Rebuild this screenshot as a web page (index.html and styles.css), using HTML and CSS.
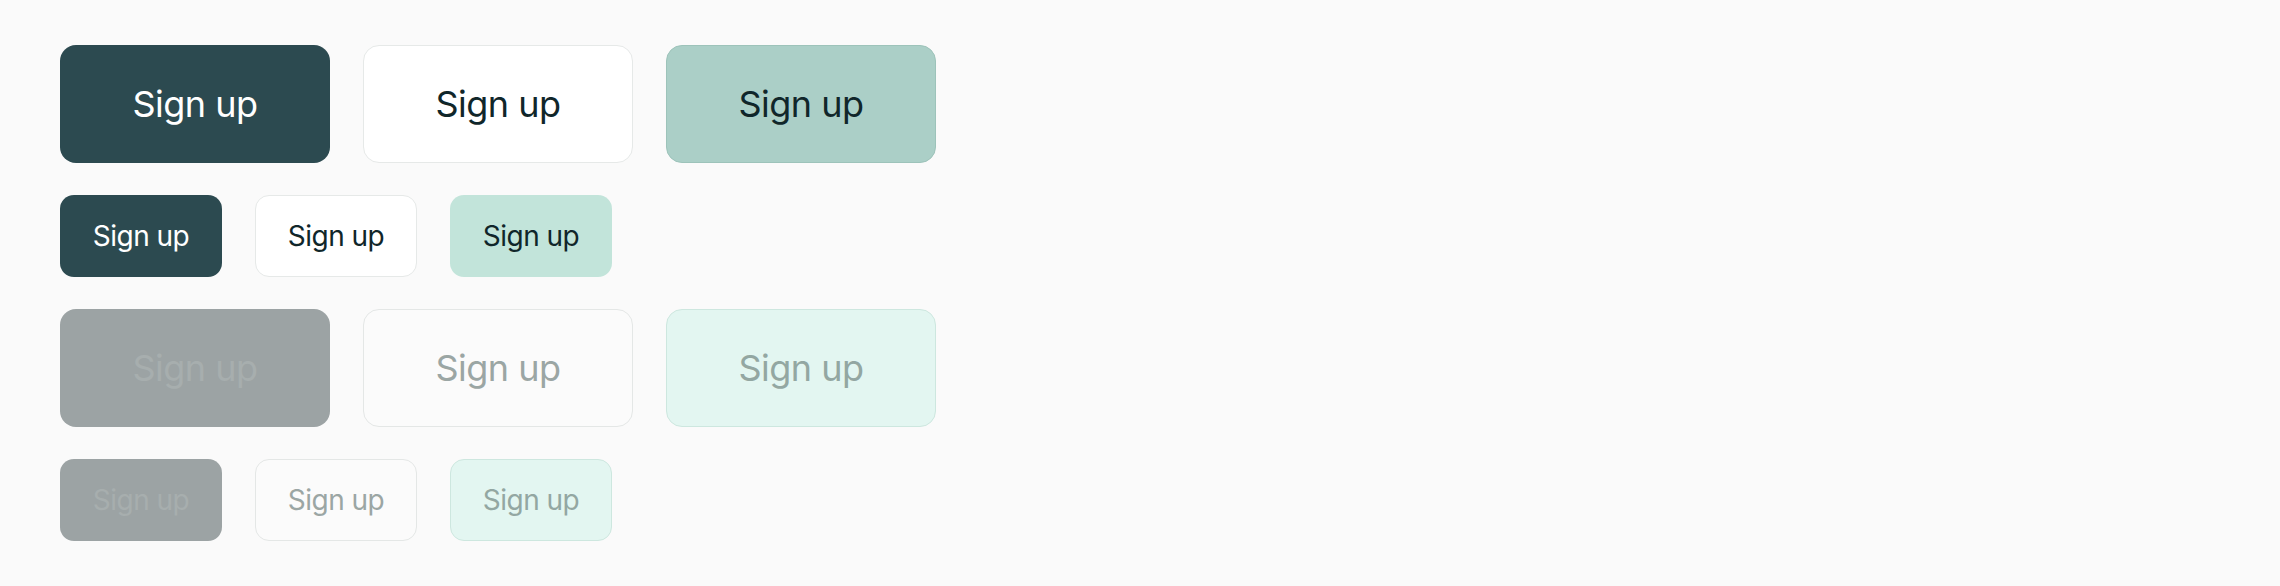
FILE: index.html
```html
<!DOCTYPE html>
<html lang="en">
<head>
<meta charset="utf-8">
<title>Buttons</title>
<link rel="stylesheet" href="styles.css">
</head>
<body>
<main class="grid">
  <div class="row">
    <button class="btn lg primary">Sign up</button>
    <button class="btn lg outline">Sign up</button>
    <button class="btn lg soft">Sign up</button>
  </div>
  <div class="row">
    <button class="btn sm primary">Sign up</button>
    <button class="btn sm outline">Sign up</button>
    <button class="btn sm soft-light">Sign up</button>
  </div>
  <div class="row">
    <button class="btn lg primary-dis">Sign up</button>
    <button class="btn lg outline-dis">Sign up</button>
    <button class="btn lg soft-dis">Sign up</button>
  </div>
  <div class="row">
    <button class="btn sm primary-dis">Sign up</button>
    <button class="btn sm outline-dis">Sign up</button>
    <button class="btn sm soft-dis">Sign up</button>
  </div>
</main>
</body>
</html>
```
FILE: styles.css
```css
html, body {
  margin: 0;
  background: #fafafa;
}
body {
  font-family: "Inter", "Noto Sans", sans-serif;
}
.grid {
  display: flex;
  flex-direction: column;
  gap: 32px;
  padding: 45px 60px;
}
.row {
  display: flex;
  gap: 33px;
}
.btn {
  font-family: inherit;
  font-weight: 400;
  letter-spacing: -0.5px;
  border: 1px solid transparent;
  display: flex;
  align-items: center;
  justify-content: center;
  box-sizing: border-box;
  margin: 0;
  cursor: pointer;
}
.lg {
  width: 270px;
  height: 118px;
  font-size: 36px;
  border-radius: 16px;
}
.sm {
  width: 162px;
  height: 82px;
  font-size: 28px;
  border-radius: 14px;
}
.primary {
  background: #2c4a50;
  color: #ffffff;
}
.outline {
  background: #ffffff;
  border-color: #e6e9e8;
  color: #10262a;
}
.soft {
  background: #abcfc7;
  border-color: #9dc3ba;
  color: #10262a;
}
.soft-light {
  background: #c2e4da;
  color: #10262a;
}
.primary-dis {
  background: #9ca3a4;
  color: #a7aeae;
}
.outline-dis {
  background: #fbfbfb;
  border-color: #e4e7e6;
  color: #9ba6a4;
}
.soft-dis {
  background: #e3f6f1;
  border-color: #cde7df;
  color: #93a7a2;
}
```
